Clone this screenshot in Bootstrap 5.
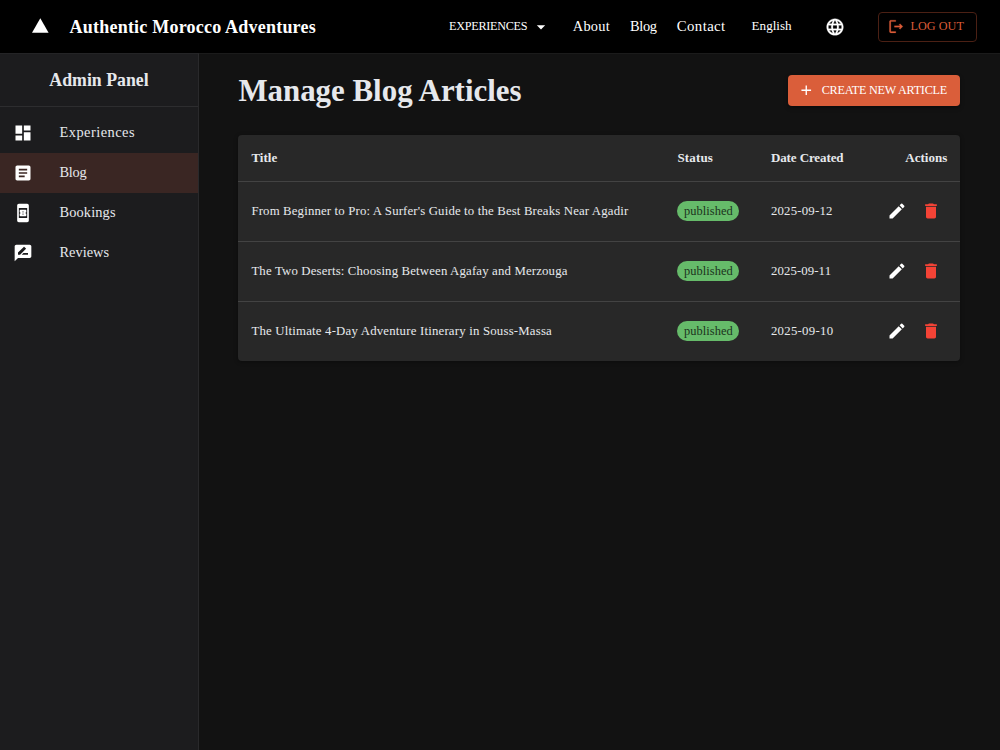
<!DOCTYPE html>
<html lang="en">
<head>
<meta charset="utf-8">
<meta name="viewport" content="width=device-width, initial-scale=1">
<title>Manage Blog Articles</title>
<link href="https://cdn.jsdelivr.net/npm/bootstrap@5.3.0/dist/css/bootstrap.min.css" rel="stylesheet">
<style>
body{font-family:"Liberation Serif",serif;background:#121212;color:#e6e8ec;overflow:hidden}
svg{fill:currentColor;flex:none;display:block}
.topbar{height:53px;background:#000;color:#fff;padding:0 23px 0 30px}
.brand-name{font-size:18px;font-weight:700;letter-spacing:.215px;margin-left:19.6px;padding-top:1px}
.top-link{font-size:14.4px;color:#fff;text-decoration:none;line-height:20px;padding-bottom:1px}
.caps{font-size:12.2px;letter-spacing:-.28px}
.logout{width:99px;height:30px;border:1px solid #4b2014;border-radius:4px;color:#dc5c38;padding:0 0 0 9px}
.side{width:199px;background:#1c1c1e;border-right:1px solid #29292b;border-top:1px solid #242426}
.side-title{height:53px;font-size:17.8px;font-weight:700;border-bottom:1px solid #2d2d2f;padding-top:1px}
.side-link{height:39.8px;font-size:14.4px;color:#e6e8ec;padding:0 0 0 13px;gap:26.5px}
.side-link svg{color:#fff}
.side-link:hover{color:#fff}
.side-link.active{background:#3a2623}
main{padding:21px 39.8px 0 39.4px;border-top:1px solid #1b1b1b}
h1{font-size:30.9px;font-weight:700;line-height:31px}
.create{width:172px;height:31px;background:#da5e3a;border-radius:4px;color:#fff;padding:0 0 0 10px;letter-spacing:-.25px;box-shadow:0 2px 4px rgba(0,0,0,.4)}
.create:hover{background:#c9532f;color:#fff}
.sheet{margin-top:29px;background:#282828;border-radius:4px;box-shadow:0 1px 4px rgba(0,0,0,.35);color:#e6e8ec}
.articles{table-layout:fixed;font-size:12.8px;line-height:20px;--bs-table-bg:transparent;--bs-table-color:#e6e8ec;border-color:#434343}
.articles th,.articles td{padding:0 13px 1px;vertical-align:middle;height:60px;border-bottom:1px solid #434343}
.articles thead th{height:46px;font-size:13px;font-weight:700;padding-bottom:0}
.articles tbody tr:last-child td{border-bottom:0}
.status{display:inline-block;width:62px;height:20px;line-height:20px;border-radius:10px;background:#66bb6a;color:#1c331d;font-size:12.4px;font-weight:400;padding:0;letter-spacing:.08px;vertical-align:middle}
.acts{gap:13.5px;padding-right:6.5px}
</style>
</head>
<body class="d-flex flex-column vh-100">
<svg class="d-none">
<symbol id="edit" viewBox="0 0 24 24"><path d="M3 17.25V21h3.75L17.81 9.94l-3.75-3.75L3 17.25zM20.71 7.04c.39-.39.39-1.02 0-1.41l-2.34-2.34a.9959.9959 0 0 0-1.41 0l-1.83 1.83 3.75 3.75 1.83-1.83z"/></symbol>
<symbol id="trash" viewBox="0 0 24 24"><path d="M6 19c0 1.1.9 2 2 2h8c1.1 0 2-.9 2-2V7H6v12zM19 4h-3.5l-1-1h-5l-1 1H5v2h14V4z"/></symbol>
</svg>
<header class="topbar d-flex align-items-center flex-shrink-0">
  <svg width="20" height="20" viewBox="0 0 20 20"><path d="M10.3 1.2 18.6 15.8H2z" fill="#fff"/></svg>
  <span class="brand-name">Authentic Morocco Adventures</span>
  <nav class="d-flex align-items-center ms-auto">
    <a class="top-link caps" href="#">EXPERIENCES</a>
    <svg class="ms-1" style="margin-right:21.5px" width="20" height="20" viewBox="0 0 24 24"><path d="m7 10 5 5 5-5z"/></svg>
    <a class="top-link" href="#" style="letter-spacing:.25px;margin-right:20px">About</a>
    <a class="top-link" href="#" style="letter-spacing:-.3px;margin-right:20px">Blog</a>
    <a class="top-link" href="#" style="font-size:14.8px;letter-spacing:.4px;margin-right:26px">Contact</a>
    <span style="font-size:13.1px;margin-right:33px;padding-bottom:1px">English</span>
    <svg style="margin-right:33.4px" width="20" height="20" viewBox="0 0 24 24"><path stroke="currentColor" stroke-width=".35" d="M11.99 2C6.47 2 2 6.48 2 12s4.47 10 9.99 10C17.52 22 22 17.52 22 12S17.52 2 11.99 2zm6.93 6h-2.95c-.32-1.25-.78-2.45-1.38-3.56 1.84.63 3.37 1.91 4.33 3.56zM12 4.04c.83 1.2 1.48 2.53 1.91 3.96h-3.82c.43-1.43 1.08-2.76 1.91-3.96zM4.26 14C4.1 13.36 4 12.69 4 12s.1-1.36.26-2h3.38c-.08.66-.14 1.32-.14 2 0 .68.06 1.34.14 2H4.26zm.82 2h2.95c.32 1.25.78 2.45 1.38 3.56-1.84-.63-3.37-1.9-4.33-3.56zm2.95-8H5.08c.96-1.66 2.49-2.93 4.33-3.56C8.81 5.55 8.35 6.75 8.03 8zM12 19.96c-.83-1.2-1.48-2.53-1.91-3.96h3.82c-.43 1.43-1.08 2.76-1.91 3.96zM14.34 14H9.66c-.09-.66-.16-1.32-.16-2 0-.68.07-1.35.16-2h4.68c.09.65.16 1.32.16 2 0 .68-.07 1.34-.16 2zm.25 5.56c.6-1.11 1.06-2.31 1.38-3.56h2.95c-.96 1.65-2.49 2.93-4.33 3.56zM16.36 14c.08-.66.14-1.32.14-2 0-.68-.06-1.34-.14-2h3.38c.16.64.26 1.31.26 2s-.1 1.36-.26 2h-3.38z"/></svg>
    <button class="btn logout caps d-flex align-items-center" style="letter-spacing:.03px"><svg style="margin-right:5.5px" width="17" height="17" viewBox="0 0 24 24"><path stroke="currentColor" stroke-width=".3" d="m17 8-1.41 1.41L17.17 11H9v2h8.17l-1.58 1.58L17 16l4-4zM4 5h7V3H4c-1.1 0-2 .9-2 2v14c0 1.1.9 2 2 2h7v-2H4V5z"/></svg>LOG OUT</button>
  </nav>
</header>
<div class="d-flex flex-grow-1">
  <aside class="side flex-shrink-0">
    <div class="side-title d-flex align-items-center justify-content-center">Admin Panel</div>
    <nav class="nav flex-column flex-nowrap" style="padding-top:6.4px">
      <a class="nav-link side-link d-flex align-items-center" href="#" style="letter-spacing:.47px"><svg width="20" height="20" viewBox="0 0 24 24"><path d="M3 13h8V3H3v10zm0 8h8v-6H3v6zm10 0h8V11h-8v10zm0-18v6h8V3h-8z"/></svg>Experiences</a>
      <a class="nav-link side-link active d-flex align-items-center" href="#" style="letter-spacing:-.3px"><svg width="20" height="20" viewBox="0 0 24 24"><path d="M19 3H5c-1.1 0-2 .9-2 2v14c0 1.1.9 2 2 2h14c1.1 0 2-.9 2-2V5c0-1.1-.9-2-2-2zm-5 14H7v-2h7v2zm3-4H7v-2h10v2zm0-4H7V7h10v2z"/></svg>Blog</a>
      <a class="nav-link side-link d-flex align-items-center" href="#" style="letter-spacing:.12px"><svg width="20" height="20" viewBox="0 0 24 24"><path d="M17 1H7c-1.1 0-2 .9-2 2v18c0 1.1.9 2 2 2h10c1.1 0 2-.9 2-2V3c0-1.1-.9-2-2-2zM7 18V6h10v12H7zm9-7V9c0-.55-.45-1-1-1H9c-.55 0-1 .45-1 1v2c.55 0 1 .45 1 1s-.45 1-1 1v2c0 .55.45 1 1 1h6c.55 0 1-.45 1-1v-2c-.55 0-1-.45-1-1s.45-1 1-1zm-3.5 3.5h-1v-1h1v1zm0-2h-1v-1h1v1zm0-2h-1v-1h1v1z"/></svg>Bookings</a>
      <a class="nav-link side-link d-flex align-items-center" href="#"><svg width="20" height="20" viewBox="0 0 24 24"><path d="M20 2H4c-1.1 0-1.99.9-1.99 2L2 22l4-4h14c1.1 0 2-.9 2-2V4c0-1.1-.9-2-2-2zM6 14v-2.47l6.88-6.88c.2-.2.51-.2.71 0l1.77 1.77c.2.2.2.51 0 .71L8.47 14H6zm12 0h-7.5l2-2H18v2z"/></svg>Reviews</a>
    </nav>
  </aside>
  <main class="flex-grow-1">
    <div class="d-flex align-items-center justify-content-between">
      <h1 class="m-0">Manage Blog Articles</h1>
      <button class="btn create caps border-0 d-flex align-items-center"><svg style="margin-right:7px" width="16.5" height="16.5" viewBox="0 0 24 24"><path d="M19 13h-6v6h-2v-6H5v-2h6V5h2v6h6v2z"/></svg>CREATE NEW ARTICLE</button>
    </div>
    <div class="sheet">
      <table class="table articles m-0">
        <colgroup><col style="width:426px"><col style="width:93.5px"><col style="width:101px"><col></colgroup>
        <thead><tr><th>Title</th><th style="letter-spacing:.16px">Status</th><th class="text-nowrap" style="letter-spacing:-.1px">Date Created</th><th class="text-end">Actions</th></tr></thead>
        <tbody>
          <tr><td style="letter-spacing:.155px">From Beginner to Pro: A Surfer's Guide to the Best Breaks Near Agadir</td><td><span class="badge status">published</span></td><td style="letter-spacing:.2px">2025-09-12</td><td><div class="acts d-flex justify-content-end"><svg class="text-white" width="20" height="20"><use href="#edit"/></svg><svg width="20" height="20" style="color:#f44336"><use href="#trash"/></svg></div></td></tr>
          <tr><td style="letter-spacing:.16px">The Two Deserts: Choosing Between Agafay and Merzouga</td><td><span class="badge status">published</span></td><td style="letter-spacing:.1px">2025-09-11</td><td><div class="acts d-flex justify-content-end"><svg class="text-white" width="20" height="20"><use href="#edit"/></svg><svg width="20" height="20" style="color:#f44336"><use href="#trash"/></svg></div></td></tr>
          <tr><td style="letter-spacing:.2px">The Ultimate 4-Day Adventure Itinerary in Souss-Massa</td><td><span class="badge status">published</span></td><td style="letter-spacing:.27px">2025-09-10</td><td><div class="acts d-flex justify-content-end"><svg class="text-white" width="20" height="20"><use href="#edit"/></svg><svg width="20" height="20" style="color:#f44336"><use href="#trash"/></svg></div></td></tr>
        </tbody>
      </table>
    </div>
  </main>
</div>
<script src="https://cdn.jsdelivr.net/npm/bootstrap@5.3.0/dist/js/bootstrap.bundle.min.js"></script>
</body>
</html>
